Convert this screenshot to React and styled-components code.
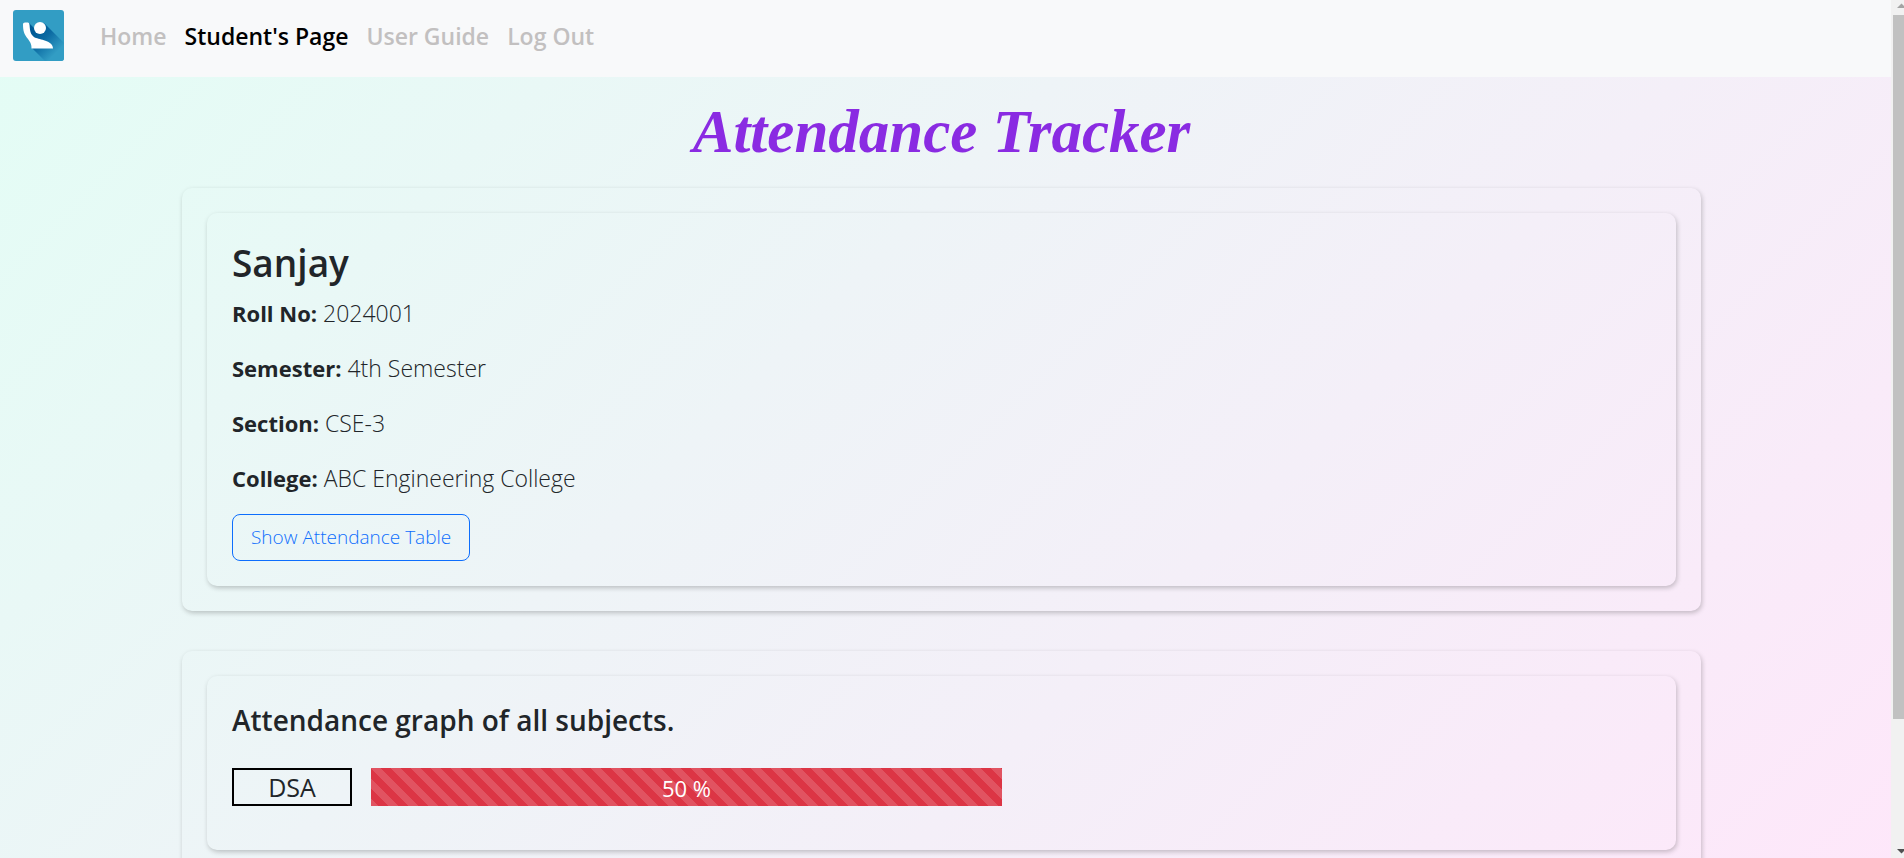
import React from "react";
import styled, { createGlobalStyle } from "styled-components";

const GlobalStyle = createGlobalStyle`
  *, *::before, *::after { box-sizing: border-box; }
  body {
    margin: 0;
    color: #212529;
    font-family: "Open Sans", "Noto Sans", sans-serif;
    font-weight: 300;
  }
`;

const Shell = styled.div`
  display: flex;
  height: 100vh;
`;

const Viewport = styled.div`
  flex: 1;
  min-width: 0;
  overflow-y: auto;
  scrollbar-width: none;
`;

const Page = styled.div`
  min-height: 100%;
  padding-bottom: 130px;
  background: linear-gradient(135deg, #e3fdf5, #ffe6fa);
`;

const Navbar = styled.nav`
  display: flex;
  align-items: center;
  gap: 36px;
  height: 77px;
  padding: 0 13px 6px;
  background: #f8f9fa;
`;

const Brand = styled.a`
  display: block;
  height: 51px;
`;

const NavList = styled.ul`
  display: flex;
  gap: 18px;
  margin: 0;
  padding: 0;
  list-style: none;
`;

const NavLink = styled.a`
  color: ${(p) => (p.$active ? "#000" : "#c2c0c0")};
  font-size: 23px;
  font-weight: 600;
  line-height: 36px;
  text-decoration: none;
`;

const Content = styled.main`
  display: flex;
  flex-direction: column;
  gap: 40px;
  padding: 19px 190px 0 182px;
`;

const Title = styled.h1`
  margin: 0 0 -19px;
  color: #8a2be2;
  font-family: "Liberation Serif", serif;
  font-size: 61px;
  font-style: italic;
  font-weight: 700;
  line-height: 71px;
  text-align: center;
`;

const Card = styled.section`
  padding: 25px;
  border-radius: 10px;
  box-shadow: 1px 2px 5px rgba(0, 0, 0, 0.22);
`;

const StudentName = styled.h2`
  margin: 0 0 8px;
  font-size: 37px;
  font-weight: 600;
  line-height: 49px;
`;

const Details = styled.dl`
  display: flex;
  flex-direction: column;
  gap: 19px;
  margin: 0 0 18px;
  font-size: 22px;
  line-height: 36px;
`;

const Detail = styled.div`
  display: flex;
  align-items: center;
  gap: 6px;
`;

const Term = styled.dt`
  font-weight: 700;
`;

const Value = styled.dd`
  margin: 0;
  font-size: 23px;
`;

const OutlineButton = styled.button`
  display: block;
  padding: 7px 18px;
  color: #0d6efd;
  font: inherit;
  font-size: 19px;
  line-height: 31px;
  background: transparent;
  border: 1px solid #0d6efd;
  border-radius: 8px;
  cursor: pointer;
`;

const GraphHeading = styled.h3`
  margin: 0 0 28px;
  font-size: 28px;
  font-weight: 600;
  line-height: 39px;
`;

const SubjectRow = styled.div`
  display: flex;
  gap: 19px;
  margin-bottom: 19px;
  padding-right: 18px;
`;

const SubjectName = styled.div`
  width: 120px;
  border: 2px solid #000;
  font-size: 25px;
  font-weight: 400;
  line-height: 34px;
  text-align: center;
`;

const Progress = styled.div`
  flex: 1;
  display: flex;
`;

const ProgressBar = styled.div`
  color: #fff;
  font-size: 22px;
  font-weight: 400;
  line-height: 40px;
  height: 38px;
  text-align: center;
  background-color: #dc3545;
  background-image: linear-gradient(
    45deg,
    rgba(255, 255, 255, 0.15) 25%,
    transparent 25%,
    transparent 50%,
    rgba(255, 255, 255, 0.15) 50%,
    rgba(255, 255, 255, 0.15) 75%,
    transparent 75%
  );
  background-size: 20px 20px;
`;

const ScrollTrack = styled.div`
  display: flex;
  flex-direction: column;
  width: 13px;
  background: #f1f1f1;
`;

const ScrollArrow = styled.svg`
  display: block;
  width: 13px;
  height: 15px;
`;

const ScrollRail = styled.div`
  flex: 1;
  padding-left: 2px;
`;

const ScrollThumb = styled.div`
  height: 85%;
  background: #c1c1c1;
`;

const Logo = () => (
  <svg width="51" height="51" viewBox="0 0 51 51" role="img" aria-label="Attendance Tracker">
    <defs>
      <linearGradient id="shade" gradientUnits="userSpaceOnUse" x1="22" y1="20" x2="44" y2="42">
        <stop offset="0" stopColor="#005b96" />
        <stop offset="0.4" stopColor="#0b6aa2" />
        <stop offset="1" stopColor="#329dc4" />
      </linearGradient>
    </defs>
    <rect width="51" height="51" rx="3" fill="#329dc4" />
    <path d="M16 13 L22 19 L31 13 L51 33 V48 Q51 51 48 51 H32 L19 38 Z" fill="url(#shade)" />
    <circle cx="27" cy="18" r="6" fill="#fff" />
    <path
      d="M10 14 Q10 12.5 12 12.5 L15 12.5 Q16.500 12.5 16.500 15 C17 22 18 26 23 28 C29 30 40 31 40 38.500 H18.500 C18.500 35 18 33 15 29 C11 24 10 21 10 14 Z"
      fill="#fff"
    />
  </svg>
);

const links = [
  { label: "Home" },
  { label: "Student's Page", active: true },
  { label: "User Guide" },
  { label: "Log Out" },
];

const details = [
  ["Roll No:", "2024001"],
  ["Semester:", "4th Semester"],
  ["Section:", "CSE-3"],
  ["College:", "ABC Engineering College"],
];

const subjects = [{ name: "DSA", percent: 50 }];

export default function App() {
  return (
    <Shell>
      <GlobalStyle />
      <Viewport>
        <Page>
          <Navbar>
            <Brand href="#">
              <Logo />
            </Brand>
            <NavList>
              {links.map((link) => (
                <li key={link.label}>
                  <NavLink href="#" $active={link.active}>
                    {link.label}
                  </NavLink>
                </li>
              ))}
            </NavList>
          </Navbar>
          <Content>
            <Title>Attendance Tracker</Title>
            <Card>
              <Card as="div">
                <StudentName>Sanjay</StudentName>
                <Details>
                  {details.map(([term, value]) => (
                    <Detail key={term}>
                      <Term>{term}</Term>
                      <Value>{value}</Value>
                    </Detail>
                  ))}
                </Details>
                <OutlineButton type="button">Show Attendance Table</OutlineButton>
              </Card>
            </Card>
            <Card>
              <Card as="div">
                <GraphHeading>Attendance graph of all subjects.</GraphHeading>
                {subjects.map(({ name, percent }) => (
                  <SubjectRow key={name}>
                    <SubjectName>{name}</SubjectName>
                    <Progress>
                      <ProgressBar style={{ width: `${percent}%` }}>{percent} %</ProgressBar>
                    </Progress>
                  </SubjectRow>
                ))}
              </Card>
            </Card>
          </Content>
        </Page>
      </Viewport>
      <ScrollTrack aria-hidden="true">
        <ScrollArrow viewBox="0 0 13 15">
          <path d="M6 8 L10.500 3.500 L13 6 V8 Z" fill="#a3a3a3" />
        </ScrollArrow>
        <ScrollRail>
          <ScrollThumb />
        </ScrollRail>
        <ScrollArrow viewBox="0 0 13 15">
          <path d="M6 6 H13 V8 L10.500 10.500 Z" fill="#505050" />
        </ScrollArrow>
      </ScrollTrack>
    </Shell>
  );
}
